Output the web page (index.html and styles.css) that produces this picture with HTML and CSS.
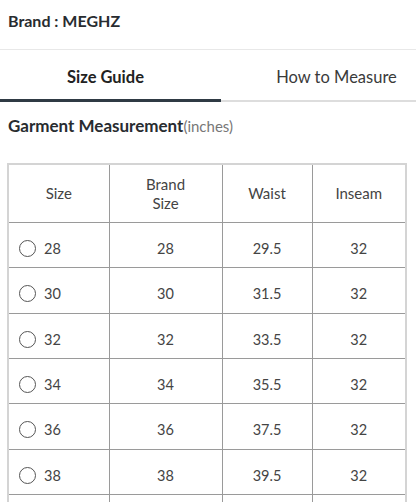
FILE: index.html
```html
<!DOCTYPE html>
<html>
<head>
<meta charset="utf-8">
<link rel="stylesheet" href="styles.css">
</head>
<body>
<div class="brand">Brand : MEGHZ</div>
<div class="tabs">
  <div class="tab active">Size Guide</div>
  <div class="tab other">How to Measure</div>
</div>
<div class="title">Garment Measurement<span class="unit">(inches)</span></div>
<table class="sizes">
  <colgroup>
    <col class="c1"><col class="c2"><col class="c3"><col class="c4">
  </colgroup>
  <thead>
    <tr><th>Size</th><th>Brand<br>Size</th><th>Waist</th><th>Inseam</th></tr>
  </thead>
  <tbody>
    <tr><td class="first"><span class="radio"></span>28</td><td>28</td><td>29.5</td><td>32</td></tr>
    <tr><td class="first"><span class="radio"></span>30</td><td>30</td><td>31.5</td><td>32</td></tr>
    <tr><td class="first"><span class="radio"></span>32</td><td>32</td><td>33.5</td><td>32</td></tr>
    <tr><td class="first"><span class="radio"></span>34</td><td>34</td><td>35.5</td><td>32</td></tr>
    <tr><td class="first"><span class="radio"></span>36</td><td>36</td><td>37.5</td><td>32</td></tr>
    <tr><td class="first"><span class="radio"></span>38</td><td>38</td><td>39.5</td><td>32</td></tr>
    <tr class="more"><td></td><td></td><td></td><td></td></tr>
  </tbody>
</table>
</body>
</html>
```
FILE: styles.css
```css
html, body {
  margin: 0;
  padding: 0;
  background: #fff;
}
body {
  font-family: Lato, "Open Sans", sans-serif;
  color: #333;
  width: 416px;
  overflow: hidden;
}
.brand {
  box-sizing: border-box;
  height: 50px;
  padding: 12px 8px 0;
  line-height: 18px;
  font-size: 16px;
  font-weight: 700;
  color: #282c30;
  border-bottom: 1px solid #e8e8e8;
}
.tabs {
  display: flex;
}
.tab {
  box-sizing: border-box;
  height: 52px;
  padding-top: 17px;
  line-height: 20px;
  font-size: 16.5px;
  text-align: center;
  color: #3a3a3a;
  flex: 1;
  border-bottom: 2px solid #dddddd;
}
.tab.active {
  flex: 0 0 221px;
  padding-right: 10px;
  font-weight: 700;
  color: #222;
  border-bottom: 3px solid #2f3a44;
}
.tab.other {
  padding-left: 36px;
}
.title {
  padding: 14px 8px 0;
  line-height: 20px;
  font-size: 17px;
  font-weight: 700;
  color: #282c30;
}
.unit {
  font-weight: 400;
  font-size: 15px;
  color: #777;
}
.sizes {
  margin: 27px 0 0 7px;
  width: 400px;
  border-collapse: collapse;
  table-layout: fixed;
  border: 2px solid #d4d4d4;
  font-size: 14.5px;
  color: #444;
}
.c1 { width: 101px; }
.c2 { width: 113px; }
.c3 { width: 90px; }
.c4 { width: 94px; }
.sizes th, .sizes td {
  border: 1px solid #9a9a9a;
  text-align: center;
  padding: 0;
}
.sizes th {
  height: 57px;
  font-weight: 400;
  font-size: 15px;
  line-height: 19px;
  color: #444;
}
.sizes tbody tr {
  height: 45.33px;
}
.sizes td {
  padding-top: 8px;
  line-height: 18px;
}
.sizes td.first {
  text-align: left;
  padding-left: 10px;
}
.radio {
  display: inline-block;
  box-sizing: border-box;
  width: 17px;
  height: 17px;
  border: 1.3px solid #555;
  border-radius: 50%;
  vertical-align: -3px;
  margin-right: 8px;
}
```
